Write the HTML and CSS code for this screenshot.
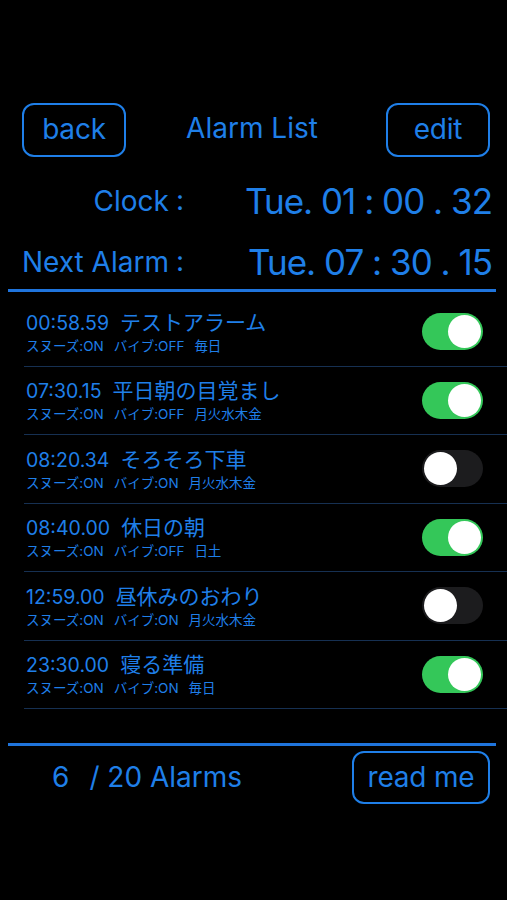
FILE: index.html
```html
<!DOCTYPE html>
<html lang="ja">
<head>
<meta charset="utf-8">
<title>Alarm List</title>
<link rel="stylesheet" href="styles.css">
</head>
<body>
<div class="screen">
  <header class="topbar">
    <div class="btn btn-nav">back</div>
    <div class="title">Alarm List</div>
    <div class="btn btn-nav">edit</div>
  </header>

  <div class="info-row clock-row">
    <div class="info-label">Clock<span class="colon">:</span></div>
    <div class="info-time">Tue. 01 : 00 . 32</div>
  </div>
  <div class="info-row next-row">
    <div class="info-label">Next Alarm<span class="colon">:</span></div>
    <div class="info-time">Tue. 07 : 30 . 15</div>
  </div>

  <div class="rule"></div>

  <ul class="alarm-list">
    <li class="alarm">
      <div class="alarm-text">
        <div class="alarm-title"><span class="a-time">00:58.59</span><span class="a-name">テストアラーム</span></div>
        <div class="alarm-sub"><span>スヌーズ:ON</span><span>バイブ:OFF</span><span>毎日</span></div>
      </div>
      <div class="toggle on"><div class="knob"></div></div>
    </li>
    <li class="alarm">
      <div class="alarm-text">
        <div class="alarm-title"><span class="a-time">07:30.15</span><span class="a-name">平日朝の目覚まし</span></div>
        <div class="alarm-sub"><span>スヌーズ:ON</span><span>バイブ:OFF</span><span>月火水木金</span></div>
      </div>
      <div class="toggle on"><div class="knob"></div></div>
    </li>
    <li class="alarm">
      <div class="alarm-text">
        <div class="alarm-title"><span class="a-time">08:20.34</span><span class="a-name">そろそろ下車</span></div>
        <div class="alarm-sub"><span>スヌーズ:ON</span><span>バイブ:ON</span><span>月火水木金</span></div>
      </div>
      <div class="toggle off"><div class="knob"></div></div>
    </li>
    <li class="alarm">
      <div class="alarm-text">
        <div class="alarm-title"><span class="a-time">08:40.00</span><span class="a-name">休日の朝</span></div>
        <div class="alarm-sub"><span>スヌーズ:ON</span><span>バイブ:OFF</span><span>日土</span></div>
      </div>
      <div class="toggle on"><div class="knob"></div></div>
    </li>
    <li class="alarm">
      <div class="alarm-text">
        <div class="alarm-title"><span class="a-time">12:59.00</span><span class="a-name">昼休みのおわり</span></div>
        <div class="alarm-sub"><span>スヌーズ:ON</span><span>バイブ:ON</span><span>月火水木金</span></div>
      </div>
      <div class="toggle off"><div class="knob"></div></div>
    </li>
    <li class="alarm">
      <div class="alarm-text">
        <div class="alarm-title"><span class="a-time">23:30.00</span><span class="a-name">寝る準備</span></div>
        <div class="alarm-sub"><span>スヌーズ:ON</span><span>バイブ:ON</span><span>毎日</span></div>
      </div>
      <div class="toggle on"><div class="knob"></div></div>
    </li>
  </ul>

  <div class="rule rule-bottom"></div>

  <footer class="footer">
    <div class="count"><span class="count-n">6</span><span class="count-rest">/ 20 Alarms</span></div>
    <div class="btn btn-readme">read me</div>
  </footer>
</div>
</body>
</html>
```

FILE: styles.css
```css
* { box-sizing: border-box; }

html, body {
  margin: 0;
  padding: 0;
  background: #000;
}

body {
  font-family: Inter, "Noto Sans CJK JP", sans-serif;
  color: #1f7fe8;
}

.screen {
  width: 507px;
  height: 900px;
  background: #000;
}

.topbar {
  display: flex;
  align-items: center;
  justify-content: space-between;
  padding: 103px 17px 0 22px;
}

.btn {
  display: flex;
  align-items: center;
  justify-content: center;
  border: 2px solid #1f7fe8;
  border-radius: 12px;
  font-size: 28px;
  letter-spacing: -0.2px;
}

.btn-nav {
  width: 104px;
  height: 54px;
  padding-bottom: 2px;
}

.title {
  font-size: 28px;
  letter-spacing: 0;
  margin-left: -8px;
  padding-bottom: 4px;
}

.info-row {
  display: flex;
  align-items: center;
  height: 40px;
  padding-right: 15px;
}

.clock-row { margin-top: 24px; }
.next-row { margin-top: 21px; }

.info-label {
  width: 184px;
  text-align: right;
  font-size: 28px;
  letter-spacing: 0;
  white-space: nowrap;
}

.colon {
  margin-left: 7px;
  position: relative;
  top: -1px;
}

.info-time {
  flex: 1;
  text-align: right;
  font-size: 35px;
  white-space: pre;
  letter-spacing: -1px;
}

.rule {
  height: 3px;
  margin: 7px 11px 0 8px;
  background: #1f74dc;
}

.alarm-list {
  list-style: none;
  margin: 6px 0 0 0;
  padding: 0;
}

.alarm {
  display: flex;
  align-items: center;
  justify-content: space-between;
  height: 68.5px;
  margin-left: 24px;
  padding-left: 2px;
  padding-right: 24px;
  border-bottom: 1px solid #163052;
}

.alarm-text {
  display: flex;
  flex-direction: column;
  padding-top: 1px;
}

.alarm-title {
  font-size: 19.5px;
  line-height: 24px;
  white-space: nowrap;
}

.a-name {
  margin-left: 11px;
  font-size: 21px;
}

.alarm-sub {
  margin-top: 3px;
  font-size: 13.5px;
  line-height: 16px;
  white-space: nowrap;
  letter-spacing: 0;
}

.alarm-sub span + span {
  margin-left: 10px;
}

.toggle {
  position: relative;
  width: 61px;
  height: 37px;
  border-radius: 19px;
  flex-shrink: 0;
}

.toggle.on { background: #34c759; }
.toggle.off { background: #1c1c1e; }

.knob {
  position: absolute;
  top: 2px;
  width: 33px;
  height: 33px;
  border-radius: 50%;
  background: #fff;
}

.toggle.on .knob { right: 2px; }
.toggle.off .knob { left: 2px; }

.rule-bottom {
  margin-top: 34px;
}

.footer {
  display: flex;
  align-items: center;
  justify-content: space-between;
  padding: 5px 17px 0 52px;
}

.count {
  font-size: 28px;
  white-space: pre;
  letter-spacing: 0;
  padding-bottom: 2px;
}

.count-rest {
  margin-left: 20px;
}

.btn-readme {
  width: 138px;
  height: 53px;
  padding-bottom: 2px;
}
```
